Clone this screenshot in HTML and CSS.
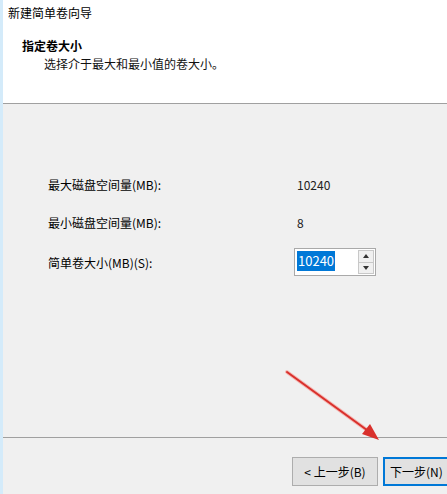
FILE: index.html
```html
<!DOCTYPE html>
<html lang="zh-CN">
<head>
    <meta charset="UTF-8">
    <meta name="viewport" content="width=device-width, initial-scale=1.0">
    <title>新建简单卷向导</title>
    <link rel="stylesheet" href="styles.css">
</head>
<body>
    <div class="wizard">
        <div class="header">
            <div class="title">新建简单卷向导</div>
            <div class="heading">指定卷大小</div>
            <div class="subtitle">选择介于最大和最小值的卷大小。</div>
        </div>

        <div class="content">
            <div class="fields">
                <div class="label">最大磁盘空间量(MB):</div>
                <div class="value">10240</div>

                <div class="label">最小磁盘空间量(MB):</div>
                <div class="value">8</div>

                <div class="label">简单卷大小(MB)(S):</div>
                <div class="value">
                    <div class="spinbox">
                        <div class="spin-text"><span class="selected">10240</span></div>
                        <div class="spin-buttons">
                            <div class="spin-btn"><span class="tri up"></span></div>
                            <div class="spin-btn"><span class="tri down"></span></div>
                        </div>
                    </div>
                </div>
            </div>
        </div>

        <div class="footer">
            <button class="btn">&lt; 上一步(B)</button>
            <button class="btn default">下一步(N)</button>
        </div>

        <svg class="arrow" width="447" height="494" viewBox="0 0 447 494">
            <line x1="287" y1="372" x2="371" y2="433" stroke="#f4b8b4" stroke-width="4" stroke-linecap="round"/>
            <line x1="287" y1="372" x2="371" y2="433" stroke="#d9302c" stroke-width="2" stroke-linecap="round"/>
            <polygon points="379,440 362,434 370,424" fill="#d9302c"/>
        </svg>
    </div>
</body>
</html>
```

FILE: styles.css
```css
* {
    margin: 0;
    padding: 0;
    box-sizing: border-box;
}

body {
    width: 447px;
    height: 494px;
    overflow: hidden;
    font-family: "Noto Sans CJK SC", "Noto Sans", sans-serif;
    font-size: 12px;
    color: #000;
    background: #f0f0f0;
}

.wizard {
    position: relative;
    display: flex;
    flex-direction: column;
    height: 494px;
    border-left: 3px solid #d4ebfa;
}

.header {
    height: 104px;
    background: #fff;
    border-bottom: 1px solid #a0a0a0;
    padding: 5px 0 0 5px;
}

.title {
    line-height: 16px;
}

.heading {
    margin: 17px 0 0 14px;
    line-height: 16px;
    font-weight: bold;
}

.subtitle {
    margin: 2px 0 0 36px;
    line-height: 16px;
    color: #111;
}

.content {
    flex: 1;
    padding: 66px 0 0 45px;
    border-bottom: 1px solid #a0a0a0;
}

.fields {
    display: grid;
    grid-template-columns: 246px 1fr;
    grid-template-rows: 28px 28px 28px;
    row-gap: 10px;
    align-items: center;
}

.fields .label:nth-of-type(5),
.fields .value:last-child {
    margin-top: 4px;
}

.value {
    color: #222;
    padding-left: 3px;
}

.spinbox {
    display: flex;
    width: 82px;
    height: 28px;
    margin-left: -3px;
    background: #fff;
    border: 1px solid #a9a9a9;
}

.spin-text {
    flex: 1;
    padding: 2px 0 0 2px;
}

.selected {
    display: inline-block;
    background: #0078d7;
    color: #fff;
    line-height: 20px;
    font-size: 13px;
    padding: 0 1px;
}

.spin-buttons {
    display: flex;
    flex-direction: column;
    width: 16px;
    margin: 1px 1px 1px 0;
}

.spin-btn {
    flex: 1;
    display: flex;
    justify-content: center;
    align-items: center;
    background: #f0f0f0;
    border: 1px solid #c8c8c8;
}

.spin-btn + .spin-btn {
    border-top: none;
}

.tri {
    width: 0;
    height: 0;
    border-left: 3px solid transparent;
    border-right: 3px solid transparent;
}

.tri.up {
    border-bottom: 4px solid #333;
}

.tri.down {
    border-top: 4px solid #333;
}

.footer {
    height: 56px;
    display: flex;
    gap: 5px;
    padding: 19px 0 0 289px;
    overflow: hidden;
}

.btn {
    flex: none;
    width: 86px;
    height: 29px;
    font-family: inherit;
    font-size: 12px;
    color: #000;
    background: #e1e1e1;
    border: 1px solid #adadad;
}

.btn.default {
    width: 70px;
    padding: 0 0 0 5px;
    text-align: left;
    border: 2px solid #0078d7;
}

.arrow {
    position: absolute;
    left: -3px;
    top: 0;
    pointer-events: none;
}
```
